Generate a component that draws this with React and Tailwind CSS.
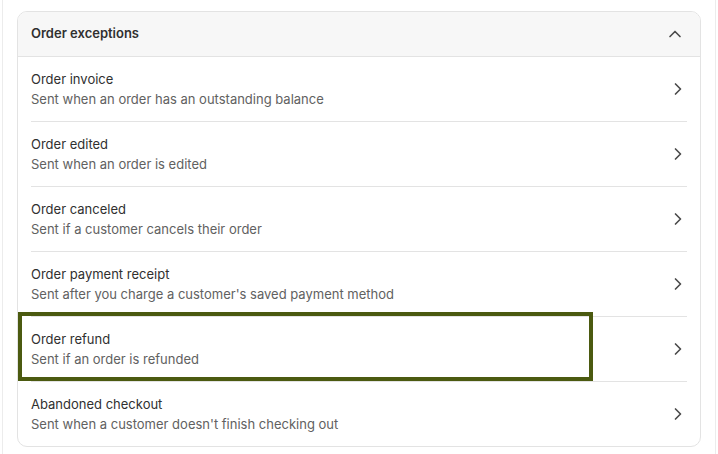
import React from "react";
import { ChevronRight, ChevronUp } from "lucide-react";

const rows = [
  ["Order invoice", "Sent when an order has an outstanding balance"],
  ["Order edited", "Sent when an order is edited"],
  ["Order canceled", "Sent if a customer cancels their order"],
  ["Order payment receipt", "Sent after you charge a customer's saved payment method"],
  ["Order refund", "Sent if an order is refunded"],
  ["Abandoned checkout", "Sent when a customer doesn't finish checking out"],
];

export default function App() {
  return (
    <div
      className="w-[718px] h-[454px] bg-white overflow-hidden"
      style={{ fontFamily: "Inter, 'Noto Sans', sans-serif" }}
    >
      <div className="ml-[2px] w-[714px] h-[454px] border-x border-[#ececec] pl-[14px] pr-[14px] pt-[11px]">
        <div className="relative w-[684px] border border-[#e3e3e3] rounded-[10px] bg-white overflow-hidden">
          <div className="h-[45px] bg-[#f7f7f7] border-b border-[#e3e3e3] flex items-center justify-between pl-[13px] pr-[15px]">
            <span className="text-[13px] font-semibold text-[#303030]">Order exceptions</span>
            <ChevronUp size={20} strokeWidth={2} className="text-[#4a4a4a]" />
          </div>
          {rows.map(([t, s], i) => (
            <div key={t} className="px-[13px]">
              <div
                className={
                  "flex items-center justify-between py-3 " +
                  (i < rows.length - 1 ? "border-b border-[#e3e3e3]" : "")
                }
              >
                <div className="flex flex-col">
                  <span className="text-[13px] leading-[20px] text-[#303030]">{t}</span>
                  <span className="text-[13px] leading-[20px] text-[#616161]">{s}</span>
                </div>
                <ChevronRight size={20} strokeWidth={2} className="text-[#4a4a4a] mr-[-1px]" />
              </div>
            </div>
          ))}
          <div className="absolute left-0 top-[300px] w-[575px] h-[69px] border-4 border-[#4b5a10] pointer-events-none" />
        </div>
      </div>
    </div>
  );
}
